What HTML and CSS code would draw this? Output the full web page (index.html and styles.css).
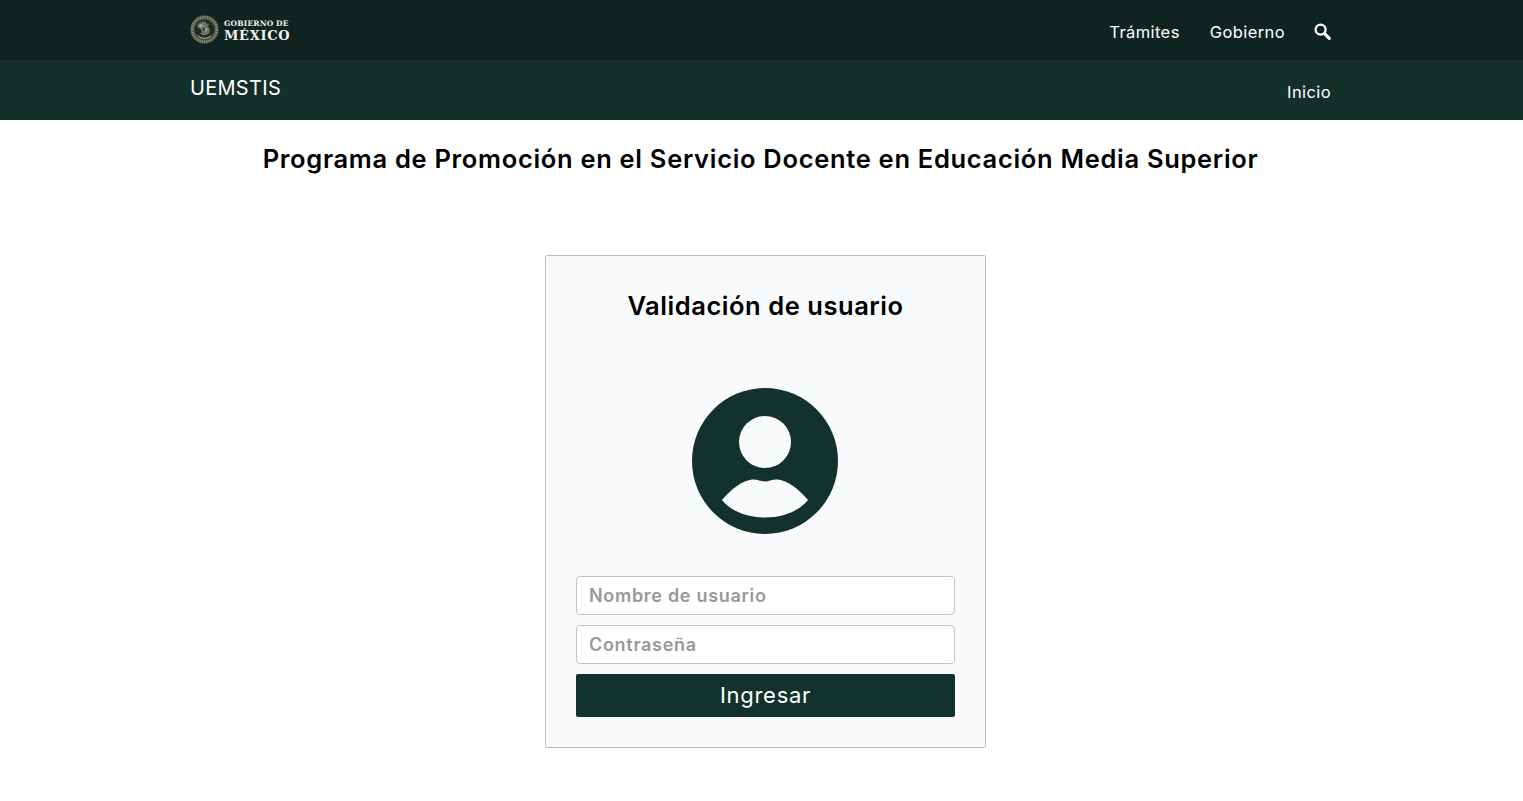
FILE: index.html
```html
<!DOCTYPE html>
<html lang="es">
<head>
<meta charset="utf-8">
<title>UEMSTIS</title>
<link rel="stylesheet" href="styles.css">
</head>
<body>
<header class="topbar">
  <div class="wrap topbar-in">
    <a class="logo" href="#">
      <svg class="seal" width="29" height="29" viewBox="0 0 29 29" aria-hidden="true">
        <circle cx="14.500" cy="14.500" r="14.200" fill="#4a4f42"/>
        <circle cx="14.500" cy="14.500" r="12.300" fill="none" stroke="#8f8e75" stroke-width="2.600" stroke-dasharray="1.300 1"/>
        <circle cx="14.500" cy="14.500" r="9.800" fill="#1f2a26"/>
        <path d="M7.500 9.500c2-2.500 5-3.500 7.500-3l1.500 2 3.500.5-2.500 1.500 2 3c1 2.500 0 5-2 6l-4 1-3.500-2 2-1.500-1.500-3-3-2z" fill="#6e7261"/>
        <path d="M10 9l3 1 2 3 3 1-2 3-3-1-1-3-3-1z" fill="#a3a38c"/>
        <path d="M7 19c4 5 11 5 15 0l-1.500 3c-3.500 2.500-8.500 2.500-12 0z" fill="#a8a78e"/>
        <path d="M12 11l2.500 2 1 3.500-2.500-1z" fill="#2c352f"/>
      </svg>
      <span class="logo-text"><span class="logo-small">GOBIERNO DE</span><span class="logo-big">MÉXICO</span></span>
    </a>
    <nav class="topnav">
      <a href="#">Trámites</a>
      <a href="#">Gobierno</a>
      <a href="#" class="search" aria-label="Buscar">
        <svg width="17" height="17" viewBox="0 0 17 17" aria-hidden="true"><circle cx="6.600" cy="6.600" r="5" fill="none" stroke="#fff" stroke-width="2.300"/><path d="M10.600 10.600l4.700 4.700" stroke="#fff" stroke-width="3.200" stroke-linecap="round"/></svg>
      </a>
    </nav>
  </div>
</header>
<div class="subbar">
  <div class="wrap subbar-in">
    <a class="brand" href="#">UEMSTIS</a>
    <a class="inicio" href="#">Inicio</a>
  </div>
</div>
<main class="main">
  <h1 class="page-title">Programa de Promoción en el Servicio Docente en Educación Media Superior</h1>
  <div class="card-row">
    <form class="card">
      <h2 class="card-title">Validación de usuario</h2>
      <svg class="avatar" width="146" height="146" viewBox="0 0 146 146" aria-hidden="true">
        <circle cx="73" cy="73" r="73" fill="#13322b"/>
        <circle cx="73" cy="54" r="26" fill="#f8fafb"/>
        <path d="M30 112C40 100 51 92.500 60 91.500C66 91 69 93.500 73 93.500C77 93.500 80 91 86 91.500C95 92.500 106 100 116 112C106 124 90 129.500 73 129.500C56 129.500 40 124 30 112Z" fill="#f8fafb"/>
      </svg>
      <input class="field" type="text" placeholder="Nombre de usuario">
      <input class="field" type="password" placeholder="Contraseña">
      <button class="submit" type="button">Ingresar</button>
    </form>
  </div>
</main>
</body>
</html>
```
FILE: styles.css
```css
* { box-sizing: border-box; }
html, body { margin: 0; padding: 0; }
body {
  font-family: Inter, "Open Sans", sans-serif;
  color: #000;
  background: #fff;
}
a { color: #fff; text-decoration: none; }
.wrap { width: 1141px; margin-left: 190px; }
.topbar { height: 60px; background: #0f2420; }
.topbar-in { height: 60px; display: flex; align-items: center; justify-content: space-between; }
.logo { display: flex; align-items: center; gap: 5px; margin-top: -1px; }
.seal { display: block; }
.logo-text { display: flex; flex-direction: column; padding-top: 2px; font-family: "DejaVu Serif", "Liberation Serif", serif; font-weight: 700; color: #f2f2ee; }
.logo-small { font-size: 7.500px; line-height: 10px; letter-spacing: 0.15px; }
.logo-big { font-size: 13px; line-height: 14px; letter-spacing: 0.7px; }
.topnav { display: flex; align-items: center; gap: 30px; font-size: 16.500px; }
.topnav a { display: block; letter-spacing: 0.4px; margin-top: 4px; }
.topnav a.search { margin: 2px 0 0 -1px; height: 17px; }
.search svg { display: block; }
.subbar { height: 60px; background: #14302b; }
.subbar-in { height: 60px; display: flex; justify-content: space-between; }
.brand { font-size: 20px; line-height: 24px; margin-top: 16px; letter-spacing: 0.3px; }
.inicio { font-size: 16.500px; line-height: 20px; margin-top: 22px; letter-spacing: 0.4px; }
.page-title { margin: 25px 0 0; height: 28px; width: 1521px; text-align: center; font-size: 25.500px; line-height: 28px; font-weight: 600; letter-spacing: 0.69px; }
.card-row { display: flex; padding-left: 545px; margin-top: 82px; }
.card { width: 441px; height: 493px; padding: 35px 30px 0; background: #f8fafb; border: 1px solid #bdbdbd; border-radius: 2px; display: flex; flex-direction: column; align-items: center; }
.card-title { margin: 0; height: 30px; font-size: 25.500px; line-height: 30px; font-weight: 600; letter-spacing: 0.55px; text-align: center; }
.avatar { display: block; margin: 67px 2px 42px 0; flex: none; }
.field { display: block; width: 379px; height: 39px; margin: 0 0 10px; padding: 0 12px; background: #fff; border: 1px solid #c4c4c4; border-radius: 4px; font: 500 18px Inter, sans-serif; letter-spacing: 0.7px; color: #333; }
.field::placeholder { color: #999; opacity: 1; font-weight: 600; }
.submit { display: block; width: 379px; height: 43px; padding: 0 0 2px; background: #13322b; border: 0; border-radius: 2px; color: #fff; font: 400 22px Inter, sans-serif; letter-spacing: 0.7px; }
```
